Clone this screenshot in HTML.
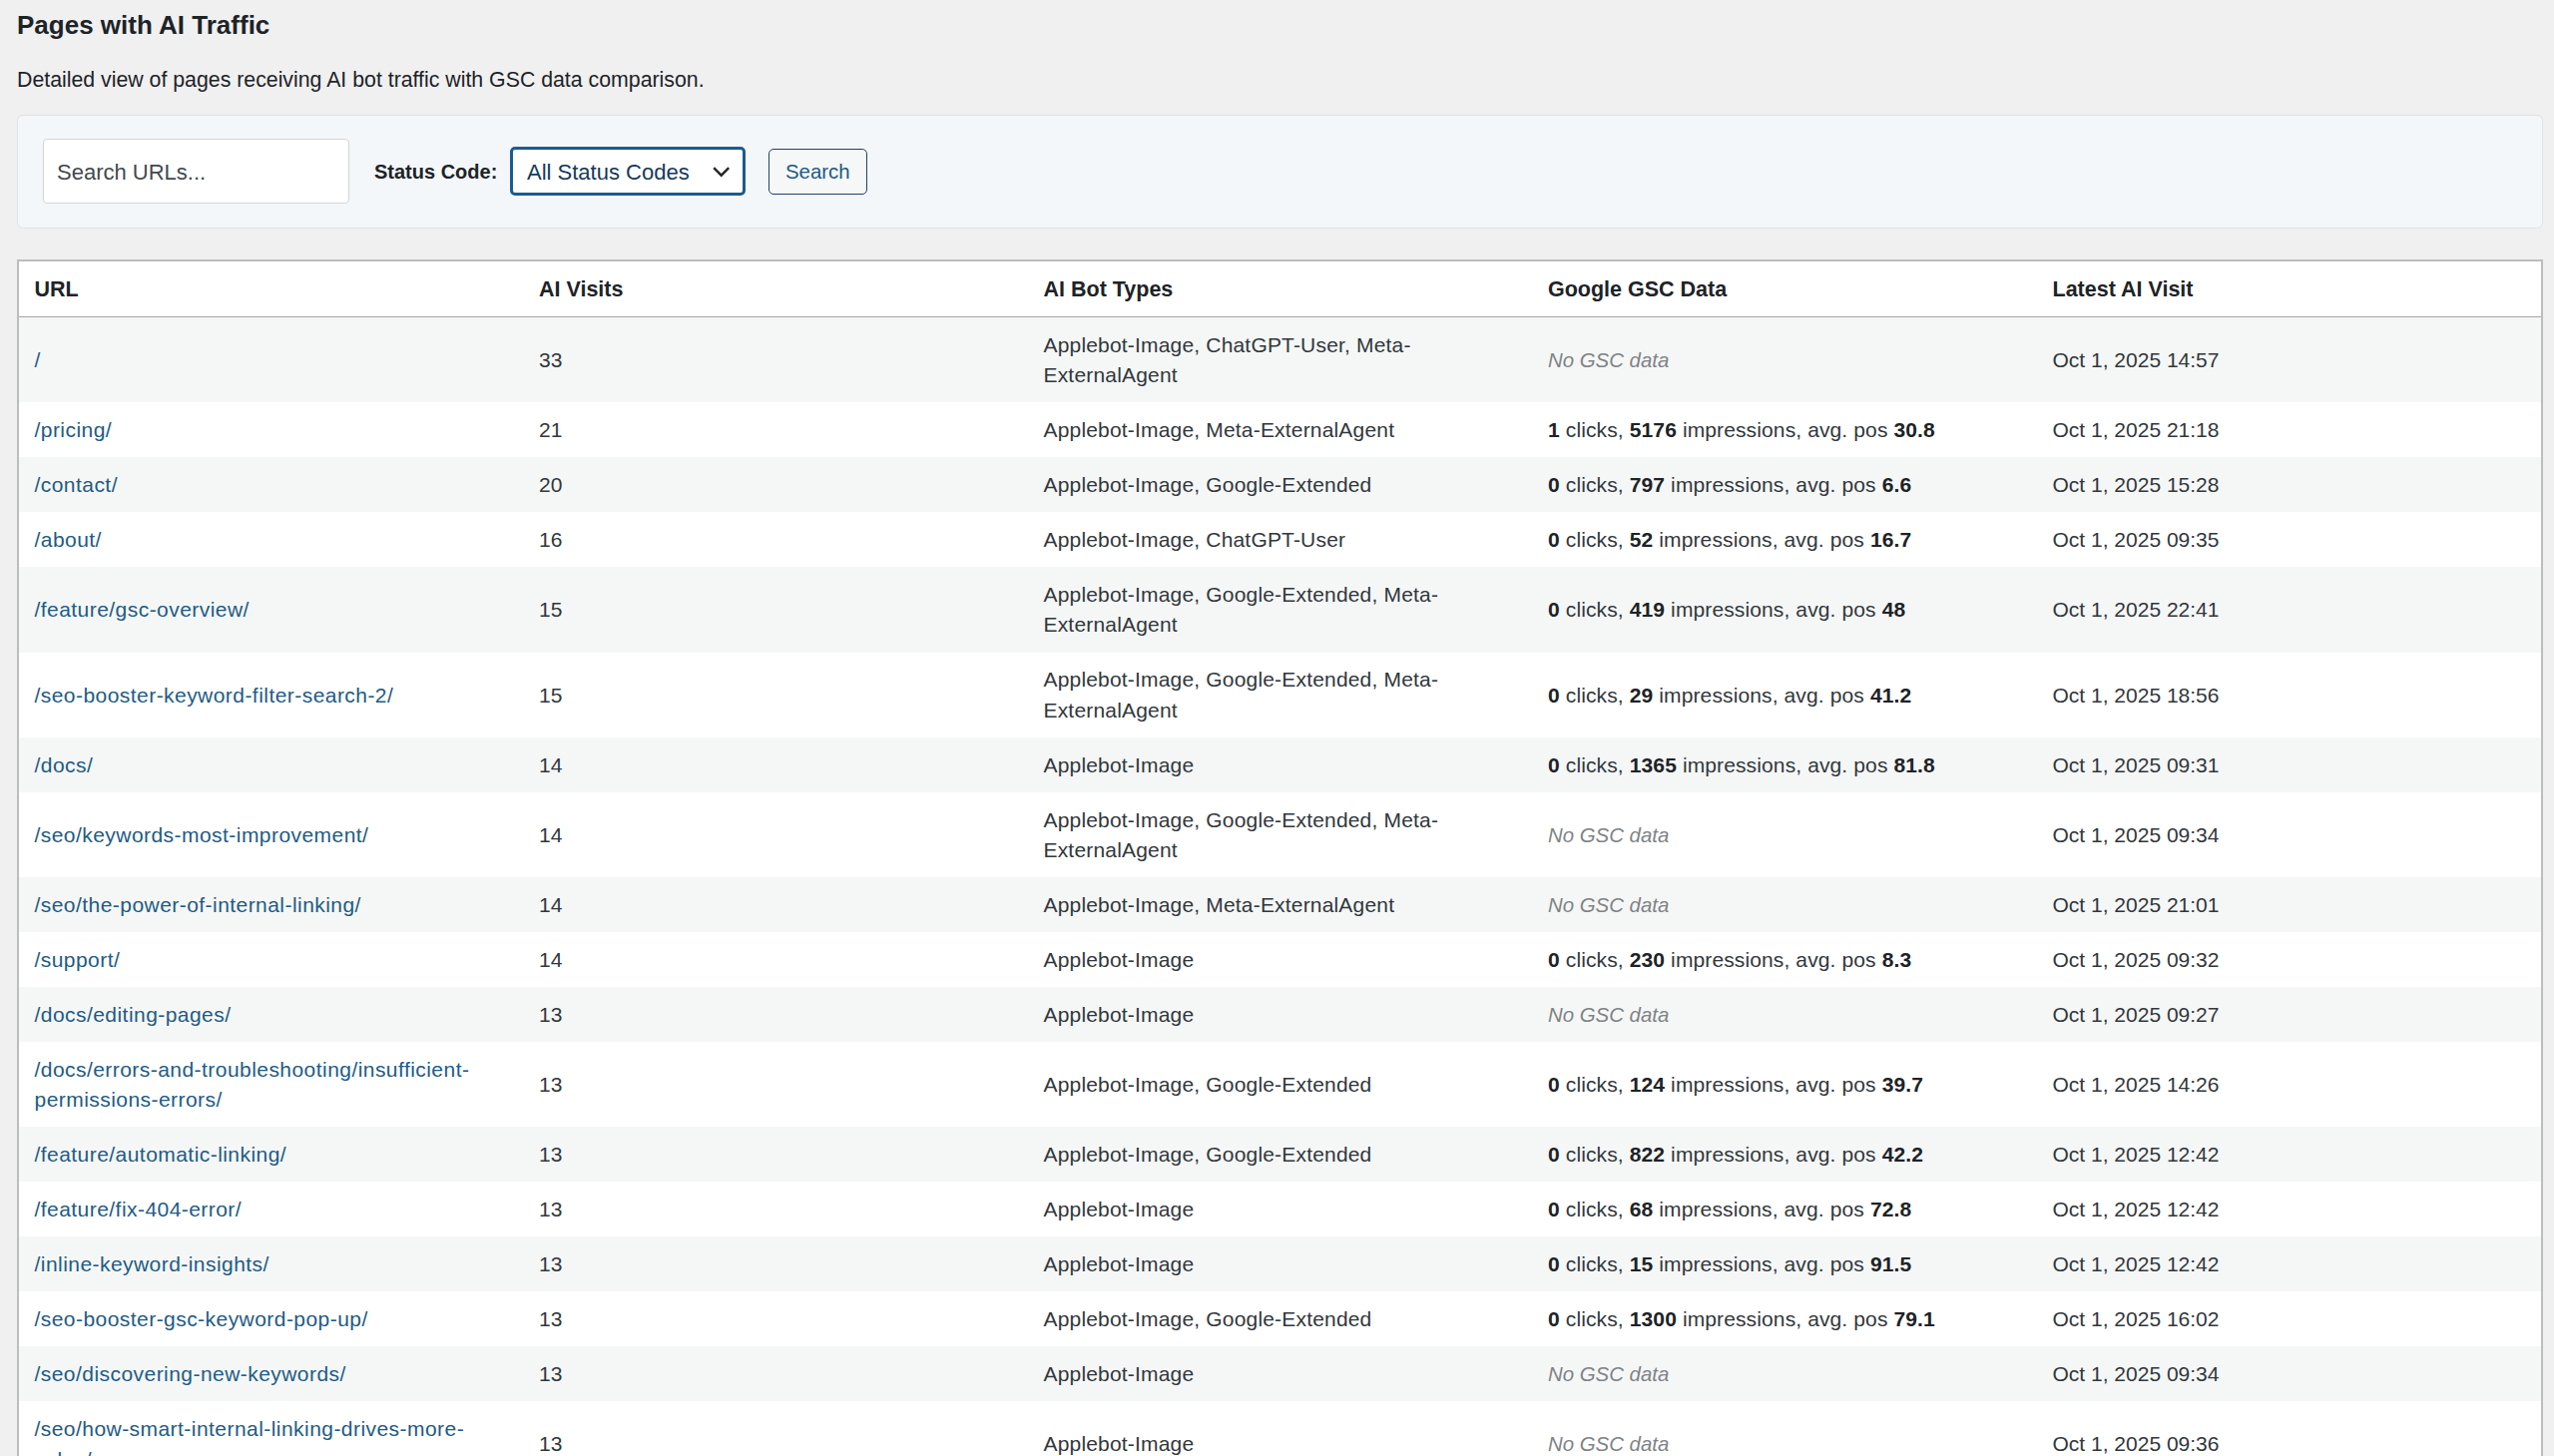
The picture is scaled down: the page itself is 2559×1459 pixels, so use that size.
<!DOCTYPE html><html><head><meta charset="utf-8"><title>Pages with AI Traffic</title><style>
*{box-sizing:border-box;margin:0;padding:0}
html,body{width:2559px;height:1459px;overflow:hidden;background:#f0f0f1;
 font-family:"Liberation Sans",sans-serif;color:#3c434a}
.abs{position:absolute;white-space:nowrap}
h2{position:absolute;left:17px;top:7.5px;font-size:26px;font-weight:bold;color:#1d2327;line-height:34px;white-space:nowrap}
.desc{left:17px;top:66px;font-size:21.3px;line-height:28px;color:#1d2327}
.filter{position:absolute;left:17.25px;top:114.6px;width:2530.5px;height:114.6px;background:#f4f7fa;
 border:1.5px solid #dfe1e4;border-radius:6px}
.inp{position:absolute;left:43px;top:139px;width:307px;height:65px;background:#fff;border:1.5px solid #d3d5d8;border-radius:4px}
.inp span{position:absolute;left:13px;top:18.5px;font-size:22px;line-height:28px;color:#43484d}
.lbl{left:375px;top:158px;font-size:20px;line-height:28px;font-weight:bold;color:#1d2327}
.sel{position:absolute;left:511px;top:147px;width:236px;height:49px;background:#fff;border:3px solid #1b5b8f;border-radius:5px}
.sel span{position:absolute;left:14px;top:8.5px;font-size:22px;line-height:28px;color:#15395e}
.sel svg{position:absolute;left:200.2px;top:17.4px}
.btn{position:absolute;left:770px;top:149px;width:99px;height:46px;background:#f6f7f7;border:1.5px solid #22406a;border-radius:5px}
.btn span{position:absolute;left:16px;top:8px;font-size:20.4px;line-height:28px;color:#1d5a85}
table{position:absolute;left:17px;top:260px;width:2531px;border-collapse:separate;border-spacing:0;table-layout:fixed;
 border:2px solid #bcbdbf;background:#fff}
th{height:56px;text-align:left;font-weight:bold;font-size:21.5px;color:#1d2327;padding:0 0 0 15.5px;
 border-bottom:1px solid #a4a5a7;vertical-align:middle;line-height:28px}
td{font-size:21px;line-height:30.3px;padding:1px 0 0 15.5px;vertical-align:middle;color:#32373c;white-space:nowrap}
tr.s td{background:#f5f7f7}
td:nth-child(4){letter-spacing:0.12px}
td:nth-child(3){letter-spacing:0.18px}
a{color:#225b85;text-decoration:none;letter-spacing:0.45px}
b{color:#1d2327;font-weight:bold}
i{color:#808386;font-size:20.4px;letter-spacing:0}
</style></head><body>
<h2>Pages with AI Traffic</h2>
<div class="abs desc">Detailed view of pages receiving AI bot traffic with GSC data comparison.</div>
<div class="filter"></div>
<div class="inp"><span>Search URLs...</span></div>
<div class="abs lbl">Status Code:</div>
<div class="sel"><span>All Status Codes</span><svg width="18" height="12" viewBox="0 0 18 12"><path d="M1.2 1.2 L8.7 8.7 L16.2 1.2" fill="none" stroke="#24282c" stroke-width="2.4" stroke-linecap="butt" stroke-linejoin="miter"/></svg></div>
<div class="btn"><span>Search</span></div>
<table><colgroup><col style="width:505.5px"><col style="width:505.5px"><col style="width:505.5px"><col style="width:505.5px"><col></colgroup>
<tr><th>URL</th><th>AI Visits</th><th>AI Bot Types</th><th>Google GSC Data</th><th>Latest AI Visit</th></tr>
<tr class="s" style="height:85.3px"><td><a>/</a></td><td>33</td><td>Applebot-Image, ChatGPT-User, Meta-<br>ExternalAgent</td><td><i>No GSC data</i></td><td>Oct 1, 2025 14:57</td></tr>
<tr style="height:55.0px"><td><a>/pricing/</a></td><td>21</td><td>Applebot-Image, Meta-ExternalAgent</td><td><b>1</b> clicks, <b>5176</b> impressions, avg. pos <b>30.8</b></td><td>Oct 1, 2025 21:18</td></tr>
<tr class="s" style="height:55.0px"><td><a>/contact/</a></td><td>20</td><td>Applebot-Image, Google-Extended</td><td><b>0</b> clicks, <b>797</b> impressions, avg. pos <b>6.6</b></td><td>Oct 1, 2025 15:28</td></tr>
<tr style="height:55.0px"><td><a>/about/</a></td><td>16</td><td>Applebot-Image, ChatGPT-User</td><td><b>0</b> clicks, <b>52</b> impressions, avg. pos <b>16.7</b></td><td>Oct 1, 2025 09:35</td></tr>
<tr class="s" style="height:85.3px"><td><a>/feature/gsc-overview/</a></td><td>15</td><td>Applebot-Image, Google-Extended, Meta-<br>ExternalAgent</td><td><b>0</b> clicks, <b>419</b> impressions, avg. pos <b>48</b></td><td>Oct 1, 2025 22:41</td></tr>
<tr style="height:85.3px"><td><a>/seo-booster-keyword-filter-search-2/</a></td><td>15</td><td>Applebot-Image, Google-Extended, Meta-<br>ExternalAgent</td><td><b>0</b> clicks, <b>29</b> impressions, avg. pos <b>41.2</b></td><td>Oct 1, 2025 18:56</td></tr>
<tr class="s" style="height:55.0px"><td><a>/docs/</a></td><td>14</td><td>Applebot-Image</td><td><b>0</b> clicks, <b>1365</b> impressions, avg. pos <b>81.8</b></td><td>Oct 1, 2025 09:31</td></tr>
<tr style="height:85.3px"><td><a>/seo/keywords-most-improvement/</a></td><td>14</td><td>Applebot-Image, Google-Extended, Meta-<br>ExternalAgent</td><td><i>No GSC data</i></td><td>Oct 1, 2025 09:34</td></tr>
<tr class="s" style="height:55.0px"><td><a>/seo/the-power-of-internal-linking/</a></td><td>14</td><td>Applebot-Image, Meta-ExternalAgent</td><td><i>No GSC data</i></td><td>Oct 1, 2025 21:01</td></tr>
<tr style="height:55.0px"><td><a>/support/</a></td><td>14</td><td>Applebot-Image</td><td><b>0</b> clicks, <b>230</b> impressions, avg. pos <b>8.3</b></td><td>Oct 1, 2025 09:32</td></tr>
<tr class="s" style="height:55.0px"><td><a>/docs/editing-pages/</a></td><td>13</td><td>Applebot-Image</td><td><i>No GSC data</i></td><td>Oct 1, 2025 09:27</td></tr>
<tr style="height:85.3px"><td><a>/docs/errors-and-troubleshooting/insufficient-<br>permissions-errors/</a></td><td>13</td><td>Applebot-Image, Google-Extended</td><td><b>0</b> clicks, <b>124</b> impressions, avg. pos <b>39.7</b></td><td>Oct 1, 2025 14:26</td></tr>
<tr class="s" style="height:55.0px"><td><a>/feature/automatic-linking/</a></td><td>13</td><td>Applebot-Image, Google-Extended</td><td><b>0</b> clicks, <b>822</b> impressions, avg. pos <b>42.2</b></td><td>Oct 1, 2025 12:42</td></tr>
<tr style="height:55.0px"><td><a>/feature/fix-404-error/</a></td><td>13</td><td>Applebot-Image</td><td><b>0</b> clicks, <b>68</b> impressions, avg. pos <b>72.8</b></td><td>Oct 1, 2025 12:42</td></tr>
<tr class="s" style="height:55.0px"><td><a>/inline-keyword-insights/</a></td><td>13</td><td>Applebot-Image</td><td><b>0</b> clicks, <b>15</b> impressions, avg. pos <b>91.5</b></td><td>Oct 1, 2025 12:42</td></tr>
<tr style="height:55.0px"><td><a>/seo-booster-gsc-keyword-pop-up/</a></td><td>13</td><td>Applebot-Image, Google-Extended</td><td><b>0</b> clicks, <b>1300</b> impressions, avg. pos <b>79.1</b></td><td>Oct 1, 2025 16:02</td></tr>
<tr class="s" style="height:55.0px"><td><a>/seo/discovering-new-keywords/</a></td><td>13</td><td>Applebot-Image</td><td><i>No GSC data</i></td><td>Oct 1, 2025 09:34</td></tr>
<tr style="height:85.3px"><td><a>/seo/how-smart-internal-linking-drives-more-<br>sales/</a></td><td>13</td><td>Applebot-Image</td><td><i>No GSC data</i></td><td>Oct 1, 2025 09:36</td></tr>
</table>
</body></html>
